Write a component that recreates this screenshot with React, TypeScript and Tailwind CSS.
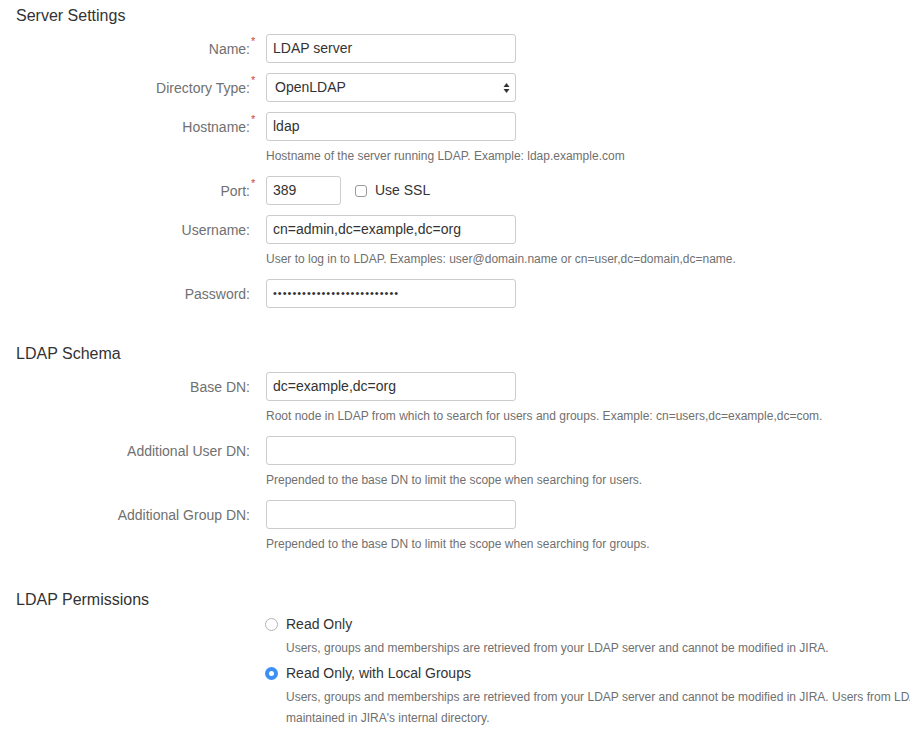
import React from "react";

const Req = () => (
  <span className="absolute left-full top-[-3px] ml-[1px] text-[11px] leading-none text-[#d04437]">*</span>
);

function Label({ text, req }: { text: string; req?: boolean }) {
  return (
    <div className="w-[234px] shrink-0 flex justify-end">
      <span className="relative text-[14px] text-[#707070] leading-5">
        {text}
        {req && <Req />}
      </span>
    </div>
  );
}

function Field({
  label,
  req,
  value,
  hint,
  width = "w-[250px]",
  children,
}: {
  label: string;
  req?: boolean;
  value?: string;
  hint?: string;
  width?: string;
  children?: React.ReactNode;
}) {
  return (
    <div className="flex flex-col mb-[10px]">
      <div className="flex items-center gap-[16px] h-[29px]">
        <Label text={label} req={req} />
        <div className="flex items-center">
          {children ?? (
            <div className={`${width} h-[29px] border border-[#cccccc] rounded-[3px] bg-white flex items-center pl-[6px] text-[14px] text-[#333333]`}>
              {value}
            </div>
          )}
        </div>
      </div>
      {hint && (
        <div className="pl-[250px] mt-[7px] mb-[2px] text-[12px] leading-4 text-[#707070] whitespace-nowrap">{hint}</div>
      )}
    </div>
  );
}

function Heading({ children, className = "" }: { children: React.ReactNode; className?: string }) {
  return <div className={`text-[16px] leading-5 text-[#333333] ${className}`}>{children}</div>;
}

export default function App() {
  return (
    <div
      className="w-[910px] h-[734px] overflow-hidden bg-white px-4 pt-[6px] flex flex-col"
      style={{ fontFamily: '"Liberation Sans", Arial, sans-serif' }}
    >
      <Heading className="mb-[8px]">Server Settings</Heading>
      <Field label="Name:" req value="LDAP server" />
      <Field label="Directory Type:" req>
        <div className="w-[250px] h-[29px] border border-[#cccccc] rounded-[3px] bg-white flex items-center justify-between pl-[8px] pr-[5px] text-[14px] text-[#333333]">
          <span>OpenLDAP</span>
          <svg width="7" height="12" viewBox="0 0 7 12">
            <path d="M3.5 1 L6.5 5 L0.5 5 Z" fill="#333" />
            <path d="M3.5 11 L6.5 7 L0.5 7 Z" fill="#333" />
          </svg>
        </div>
      </Field>
      <Field label="Hostname:" req value="ldap" hint="Hostname of the server running LDAP. Example: ldap.example.com" />
      <Field label="Port:" req>
        <div className="w-[75px] h-[29px] border border-[#cccccc] rounded-[3px] bg-white flex items-center pl-[6px] text-[14px] text-[#333333]">
          389
        </div>
        <span className="ml-[14px] w-[12px] h-[12px] border border-[#9a9a9a] rounded-[3px] bg-white" />
        <span className="ml-[8px] text-[14px] text-[#333333]">Use SSL</span>
      </Field>
      <Field
        label="Username:"
        value="cn=admin,dc=example,dc=org"
        hint="User to log in to LDAP. Examples: user@domain.name or cn=user,dc=domain,dc=name."
      />
      <Field label="Password:">
        <div className="w-[250px] h-[29px] border border-[#cccccc] rounded-[3px] bg-white flex items-center pl-[6px] text-[11px] tracking-[1px] text-[#333333]">
          {"•".repeat(26)}
        </div>
      </Field>

      <Heading className="mt-[26px] mb-[8px]">LDAP Schema</Heading>
      <Field
        label="Base DN:"
        value="dc=example,dc=org"
        hint="Root node in LDAP from which to search for users and groups. Example: cn=users,dc=example,dc=com."
      />
      <Field
        label="Additional User DN:"
        value=""
        hint="Prepended to the base DN to limit the scope when searching for users."
      />
      <Field
        label="Additional Group DN:"
        value=""
        hint="Prepended to the base DN to limit the scope when searching for groups."
      />

      <Heading className="mt-[26px]">LDAP Permissions</Heading>
      <div className="pl-[249px] mt-[4px] flex flex-col">
        <div className="flex items-center h-5">
          <span className="w-[13px] h-[13px] rounded-full border border-[#b5b5b5] bg-white shrink-0" />
          <span className="ml-[8px] text-[14px] text-[#333333]">Read Only</span>
        </div>
        <div className="pl-[21px] mt-[4px] mb-[4px] text-[12px] leading-[21px] text-[#707070] whitespace-nowrap">
          Users, groups and memberships are retrieved from your LDAP server and cannot be modified in JIRA.
        </div>
        <div className="flex items-center h-5">
          <span className="w-[13px] h-[13px] rounded-full bg-[#3b8ff5] shrink-0 flex items-center justify-center">
            <span className="w-[5px] h-[5px] rounded-full bg-white" />
          </span>
          <span className="ml-[8px] text-[14px] text-[#333333]">Read Only, with Local Groups</span>
        </div>
        <div className="pl-[21px] mt-[4px] text-[12px] leading-[21px] text-[#707070] whitespace-nowrap">
          <div>
            Users, groups and memberships are retrieved from your LDAP server and cannot be modified in JIRA. Users from LDAP can be added to groups
          </div>
          <div>maintained in JIRA's internal directory.</div>
        </div>
      </div>
    </div>
  );
}
